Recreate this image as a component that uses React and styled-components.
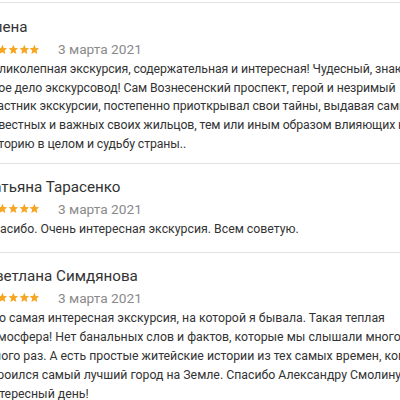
import React from 'react';
import styled, { createGlobalStyle } from 'styled-components';

const GlobalStyle = createGlobalStyle`
  html, body {
    margin: 0;
    padding: 0;
    background: #ffffff;
    overflow: hidden;
  }
  body {
    font-family: Roboto, "Noto Sans", Arial, sans-serif;
  }
`;

const ReviewList = styled.div`
  width: 448.5px;
  margin-left: -15px;
  padding-top: 2px;
`;

const Review = styled.div`
  border-top: 1px solid #e2e2e2;
  padding: ${props => (props.first ? '14px 0 9px' : '13px 0 13px')};
`;

const Author = styled.div`
  font-size: 15.2px;
  line-height: 20px;
  color: #333333;
`;

const Meta = styled.div`
  display: flex;
  align-items: center;
  gap: 18px;
  height: 20px;
  margin-top: 2px;
`;

const Stars = styled.div`
  display: flex;
  padding-left: 1.5px;
`;

const DateText = styled.span`
  font-size: 13.7px;
  color: #8a8a8a;
`;

const Text = styled.p`
  margin: 1px 0 0;
  font-size: 12.3px;
  line-height: ${props => props.lh || '19px'};
  letter-spacing: ${props => props.spacing || '0'};
  color: #333333;
`;

const Star = () => (
  <svg width="10.7" height="11" viewBox="0 0 24 24">
    <path
      fill="#f5a623"
      d="M12 1.5l3.1 7.1 7.7.7-5.8 5.1 1.7 7.6L12 18l-6.7 4 1.7-7.6-5.8-5.1 7.7-.7z"
    />
  </svg>
);

const reviews = [
  {
    id: 1,
    author: 'Елена',
    date: '3 марта 2021',
    lh: '18.7px',
    spacing: '-0.1px',
    text: 'Великолепная экскурсия, содержательная и интересная! Чудесный, знающий свое дело экскурсовод! Сам Вознесенский проспект, герой и незримый участник экскурсии, постепенно приоткрывал свои тайны, выдавая самых известных и важных своих жильцов, тем или иным образом влияющих на историю в целом и судьбу страны..'
  },
  {
    id: 2,
    author: 'Татьяна Тарасенко',
    date: '3 марта 2021',
    text: 'Спасибо. Очень интересная экскурсия. Всем советую.'
  },
  {
    id: 3,
    author: 'Светлана Симдянова',
    date: '3 марта 2021',
    text: 'Это самая интересная экскурсия, на которой я бывала. Такая теплая атмосфера! Нет банальных слов и фактов, которые мы слышали много-много раз. А есть простые житейские истории из тех самых времен, когда строился самый лучший город на Земле. Спасибо Александру Смолину за интересный день!'
  }
];

const App = () => (
  <>
    <GlobalStyle />
    <ReviewList>
      {reviews.map((review, i) => (
        <Review key={review.id} first={i === 0}>
          <Author>{review.author}</Author>
          <Meta>
            <Stars>
              {[0, 1, 2, 3, 4].map(n => <Star key={n} />)}
            </Stars>
            <DateText>{review.date}</DateText>
          </Meta>
          <Text lh={review.lh} spacing={review.spacing}>{review.text}</Text>
        </Review>
      ))}
    </ReviewList>
  </>
);

export default App;
